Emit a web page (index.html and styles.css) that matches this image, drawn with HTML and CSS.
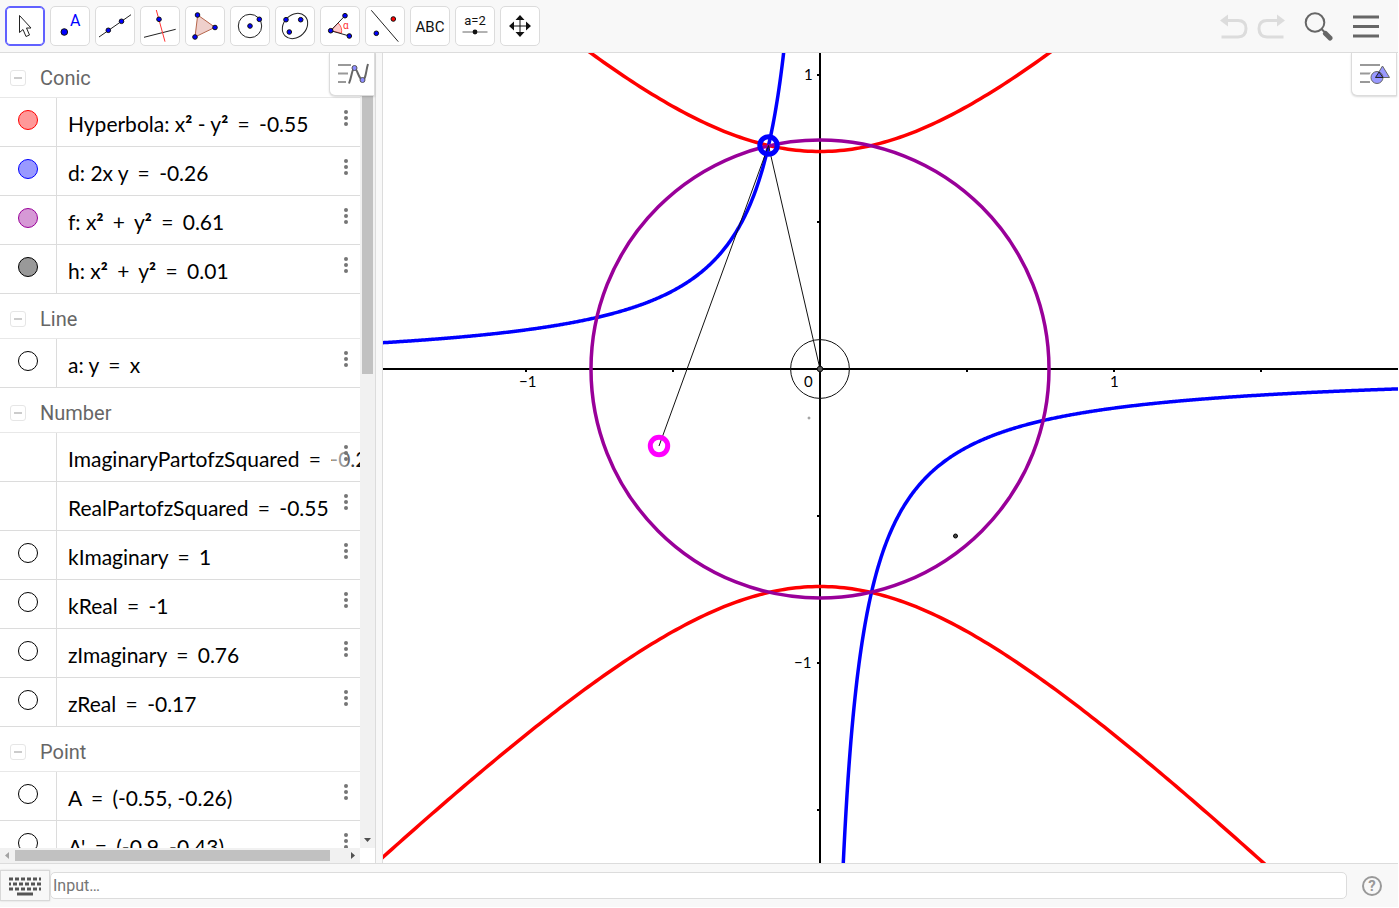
FILE: index.html
```html
<!DOCTYPE html>
<html lang="en">
<head>
<meta charset="utf-8">
<title>Graphing</title>
<link rel="stylesheet" href="styles.css">
</head>
<body>
<header class="toolbar">
  <div class="tools">
    <button class="tool selected" aria-label="Move"><svg viewBox="1 1 38 38"><path class="pointer" d="M14.500 9.500V26.500L18 23.500L21 30.500L24.500 29L21.500 22H26Z"/></svg></button>
    <button class="tool" aria-label="Point"><svg viewBox="1 1 38 38"><circle class="dot" cx="14.300" cy="26" r="3.300"/><text class="blue-text" x="20" y="20">A</text></svg></button>
    <button class="tool" aria-label="Line"><svg viewBox="1 1 38 38"><path class="thin" d="M4 31L36 8.700"/><circle class="dot" cx="13.300" cy="24.300" r="2.300"/><circle class="dot" cx="26.500" cy="15.300" r="2.300"/></svg></button>
    <button class="tool" aria-label="Perpendicular line"><svg viewBox="1 1 38 38"><path class="thin" d="M4 31.300L35.700 23.300"/><path class="thin red" d="M16.300 4L25 35.700"/><circle class="dot" cx="19" cy="13.300" r="2.300"/></svg></button>
    <button class="tool" aria-label="Polygon"><svg viewBox="1 1 38 38"><path class="poly" d="M12.700 9L30 21.300L10 31Z"/><circle class="dot" cx="12.500" cy="9" r="2.300"/><circle class="dot" cx="30" cy="21.500" r="2.300"/><circle class="dot" cx="10" cy="31" r="2.300"/></svg></button>
    <button class="tool" aria-label="Circle with center"><svg viewBox="1 1 38 38"><circle class="thin" cx="20" cy="20" r="11.700"/><circle class="dot" cx="20" cy="20" r="2.300"/><circle class="dot" cx="29.300" cy="13.300" r="2.300"/></svg></button>
    <button class="tool" aria-label="Conic"><svg viewBox="1 1 38 38"><ellipse class="thin" cx="20" cy="20" rx="14" ry="11.200" transform="rotate(-45 20 20)"/><circle class="dot" cx="11" cy="13.700" r="2.300"/><circle class="dot" cx="25.700" cy="13.700" r="2.300"/><circle class="dot" cx="14.300" cy="26" r="2.300"/></svg></button>
    <button class="tool" aria-label="Angle"><svg viewBox="1 1 38 38"><path class="wedge" d="M10.700 24.700L18 17Q22.500 21 21.500 27.200Z"/><path class="thin" d="M25 9.700L10.700 24.700L29.300 30"/><circle class="dot" cx="25" cy="9.700" r="2.300"/><circle class="dot" cx="10.700" cy="24.700" r="2.300"/><circle class="dot" cx="29.300" cy="30" r="2.300"/><text class="red-text" x="23" y="23">α</text></svg></button>
    <button class="tool" aria-label="Reflect"><svg viewBox="1 1 38 38"><path class="thin" d="M6.300 4.300L33.300 35.700"/><circle class="dot red-dot" cx="28.300" cy="13" r="2.300"/><circle class="dot" cx="11.300" cy="27.300" r="2.300"/></svg></button>
    <button class="tool" aria-label="Text"><svg viewBox="1 1 38 38"><text class="abc" x="20" y="25.500">ABC</text></svg></button>
    <button class="tool" aria-label="Slider"><svg viewBox="1 1 38 38"><text class="slider-text" x="20" y="19">a=2</text><path class="slider-line" d="M7.500 26H32.500"/><circle class="black" cx="20" cy="26" r="2.400"/></svg></button>
    <button class="tool" aria-label="Move view"><svg viewBox="1 1 38 38"><path class="slider-line cross" d="M20 12V28M12 20H28"/><path class="black" d="M20 9L24.500 14H15.500ZM20 31L24.500 26H15.500ZM9 20L14 15.500V24.500ZM31 20L26 15.500V24.500Z"/></svg></button>
  </div>
  <div class="actions">
    <button class="action" aria-label="Undo"><svg width="30" height="28" viewBox="0 0 30 28"><path class="faint-fill" d="M1 8.500L9 2.500V14.500Z"/><path class="faint" d="M8 8.500H19Q27 8.500 27 16.500T19 25H2.500"/></svg></button>
    <button class="action" aria-label="Redo"><svg width="30" height="28" viewBox="0 0 30 28"><path class="faint-fill" d="M29 8.500L21 2.500V14.500Z"/><path class="faint" d="M22 8.500H11Q3 8.500 3 16.500T11 25H27.500"/></svg></button>
    <button class="action search" aria-label="Search"><svg width="30" height="30" viewBox="0 0 30 30"><circle class="lens" cx="11" cy="11.500" r="9.300"/><path class="lens" d="M17.500 18L21 21.500"/><path class="handle" d="M21.500 22.500L26 27"/></svg></button>
    <button class="action" aria-label="Menu"><svg width="28" height="24" viewBox="0 0 28 24"><path class="bars" d="M1 3H27M1 12.500H27M1 22H27"/></svg></button>
  </div>
</header>

<main class="workspace">
  <section class="algebra" aria-label="Algebra">
    <div class="list-area">
      <div class="list">
        <h2 class="group"><button class="fold" aria-label="Collapse Conic"></button>Conic</h2>
        <div class="row"><div class="marker"><button class="marble m-red" aria-label="Toggle Hyperbola"></button></div><div class="expr">Hyperbola: x<b>²</b> - y<b>²</b> <span class="op">=</span> -0.55</div><button class="more" aria-label="More"><i></i><i></i><i></i></button></div>
        <div class="row"><div class="marker"><button class="marble m-blue" aria-label="Toggle d"></button></div><div class="expr">d: 2x y <span class="op">=</span> -0.26</div><button class="more" aria-label="More"><i></i><i></i><i></i></button></div>
        <div class="row"><div class="marker"><button class="marble m-purple" aria-label="Toggle f"></button></div><div class="expr">f: x<b>²</b> <span class="op">+</span> y<b>²</b> <span class="op">=</span> 0.61</div><button class="more" aria-label="More"><i></i><i></i><i></i></button></div>
        <div class="row"><div class="marker"><button class="marble m-gray" aria-label="Toggle h"></button></div><div class="expr">h: x<b>²</b> <span class="op">+</span> y<b>²</b> <span class="op">=</span> 0.01</div><button class="more" aria-label="More"><i></i><i></i><i></i></button></div>
        <h2 class="group"><button class="fold" aria-label="Collapse Line"></button>Line</h2>
        <div class="row"><div class="marker"><button class="marble" aria-label="Toggle a"></button></div><div class="expr">a: y <span class="op">=</span> x</div><button class="more" aria-label="More"><i></i><i></i><i></i></button></div>
        <h2 class="group"><button class="fold" aria-label="Collapse Number"></button>Number</h2>
        <div class="row"><div class="marker"></div><div class="expr">ImaginaryPartofzSquared <span class="op">=</span> -0.2</div><button class="more" aria-label="More"><i></i><i></i><i></i></button></div>
        <div class="row"><div class="marker"></div><div class="expr">RealPartofzSquared <span class="op">=</span> -0.55</div><button class="more" aria-label="More"><i></i><i></i><i></i></button></div>
        <div class="row"><div class="marker"><button class="marble" aria-label="Toggle kImaginary"></button></div><div class="expr">kImaginary <span class="op">=</span> 1</div><button class="more" aria-label="More"><i></i><i></i><i></i></button></div>
        <div class="row"><div class="marker"><button class="marble" aria-label="Toggle kReal"></button></div><div class="expr">kReal <span class="op">=</span> -1</div><button class="more" aria-label="More"><i></i><i></i><i></i></button></div>
        <div class="row"><div class="marker"><button class="marble" aria-label="Toggle zImaginary"></button></div><div class="expr">zImaginary <span class="op">=</span> 0.76</div><button class="more" aria-label="More"><i></i><i></i><i></i></button></div>
        <div class="row"><div class="marker"><button class="marble" aria-label="Toggle zReal"></button></div><div class="expr">zReal <span class="op">=</span> -0.17</div><button class="more" aria-label="More"><i></i><i></i><i></i></button></div>
        <h2 class="group"><button class="fold" aria-label="Collapse Point"></button>Point</h2>
        <div class="row"><div class="marker"><button class="marble" aria-label="Toggle A"></button></div><div class="expr">A <span class="op">=</span> (-0.55, -0.26)</div><button class="more" aria-label="More"><i></i><i></i><i></i></button></div>
        <div class="row"><div class="marker"><button class="marble" aria-label="Toggle A'"></button></div><div class="expr">A' <span class="op">=</span> (-0.9, -0.43)</div><button class="more" aria-label="More"><i></i><i></i><i></i></button></div>
      </div>
      <div class="vscroll"><div class="vthumb"></div><svg width="15" height="15" viewBox="0 0 15 15"><path class="arrow" d="M4 5H11L7.500 9Z"/></svg></div>
    </div>
    <div class="hscroll"><svg width="15" height="15" viewBox="0 0 15 15"><path class="arrow dim" d="M9 4V11L5 7.500Z"/></svg><div class="htrack"><div class="hthumb"></div></div><svg width="15" height="15" viewBox="0 0 15 15"><path class="arrow" d="M6 4V11L10 7.500Z"/></svg></div>
    <button class="stylebar" aria-label="Algebra settings"><svg width="44" height="42" viewBox="0 0 44 42"><path class="sbars" d="M8 12H21M8 20.500H18M8 29H16"/><path class="wave" d="M19 30.500C22 23 22 15 24.500 15S29 27 32.500 27S36 17 38 11"/><circle class="node" cx="24.500" cy="15" r="2.500"/><circle class="node" cx="32.500" cy="27" r="2.500"/></svg></button>
  </section>
  <div class="splitter"></div>
  <section class="graphics" aria-label="Graphics">
    <svg class="plot">
      <g transform="translate(437 316)">
        <path class="axis" d="M-2000 0H2000M0 -2000V2000"/>
        <path class="tick" d="M-294 0V3M-147 0V3M147 0V3M294 0V3M441 0V3M-3 -294H0M-3 -147H0M-3 147H0M-3 294H0M-3 441H0"/>
        <g class="labels"><text x="-301" y="18">−1</text><text x="-16" y="18">0</text><text x="290" y="18">1</text><text x="-16" y="-289">1</text><text x="-26" y="299">−1</text></g>
        <circle class="small-circle" r="29.400"/>
        <path id="hyperbola" class="curve c-red"/>
        <path id="product" class="curve c-blue"/>
        <circle class="curve c-purple" r="229"/>
        <path class="segment" d="M0 0L-51.500 -223.500L-161 77"/>
        <circle class="ring c-blue" cx="-51.500" cy="-223.500" r="8.700"/>
        <circle class="ring c-magenta" cx="-161" cy="77" r="8.700"/>
        <circle class="origin" r="2.800"/>
        <circle class="speck" cx="-11" cy="49" r="1"/>
        <circle class="point" cx="135.500" cy="167" r="2"/>
      </g>
    </svg>
    <button class="stylebar graphics-bar" aria-label="Graphics settings"><svg width="44" height="42" viewBox="0 0 44 42"><path class="sbars" d="M8 12H28M8 20.500H19M8 29H18"/><path class="halo" d="M30.500 13L37.500 24.500H23.500Z"/><circle class="halo" cx="25" cy="24.500" r="6"/><path class="shape" d="M30.500 13L37.500 24.500H23.500Z"/><circle class="shape" cx="25" cy="24.500" r="6"/><path class="overlap" d="M27 19L31 24.500H23.500Z"/></svg></button>
  </section>
</main>

<footer class="inputbar">
  <button class="keyboard" aria-label="Keyboard"><svg width="34" height="20" viewBox="0 0 34 20"><path class="keys" stroke-dasharray="4 2" d="M1 3H33M1 13H33"/><path class="keys" stroke-dasharray="4 2" stroke-dashoffset="2" d="M1 8H33"/><path class="keys" d="M9 18H25"/></svg></button>
  <input class="entry" type="text" placeholder="Input…" aria-label="Input">
  <button class="help" aria-label="Help">?</button>
</footer>
<script src="plot.js"></script>
</body>
</html>
```

FILE: styles.css
```css
* { box-sizing: border-box; }
html, body { height: 100%; }
body {
  margin: 0;
  padding: 0 1px 1px 0;
  display: flex;
  flex-direction: column;
  overflow: hidden;
  background: #fff;
  font-family: Roboto, "Liberation Sans", sans-serif;
}
button { margin: 0; padding: 0; border: 0; background: none; font: inherit; }
svg { display: block; fill: none; }

.toolbar {
  flex: none;
  display: flex;
  justify-content: space-between;
  align-items: center;
  height: 53px;
  padding: 0 18px 0 5px;
  background: #f8f8f8;
  border-bottom: 1px solid #dcdcdc;
}
.tools { display: flex; gap: 5px; }
.tool {
  width: 40px;
  height: 40px;
  background: #fff;
  border: 1px solid #dcdcdc;
  border-radius: 5px;
}
.tool svg { width: 38px; height: 38px; }
.selected { border-color: #6161ff; box-shadow: inset 0 0 0 1px #6161ff; }
.pointer { stroke: #222; fill: #fff; }
.dot { fill: #00f; stroke: #111; }
.red-dot { fill: #f00; }
.thin { stroke: #222; }
.red { stroke: #f33; }
.poly { stroke: #b5654a; fill: #efd0cc; }
.wedge { stroke: #f55; fill: #fcc; }
.black { fill: #111; }
.slider-line { stroke: #666; }
.cross { stroke: #111; }
.blue-text { fill: #00f; font-size: 16px; }
.red-text { fill: #f33; font-size: 10px; }
.abc { fill: #111; font-size: 15px; text-anchor: middle; }
.slider-text { fill: #111; font-size: 13px; text-anchor: middle; }

.actions { display: flex; align-items: center; gap: 7px; }
.search { margin: 0 11px; }
.faint { stroke: #dcdcdc; stroke-width: 3; }
.faint-fill { fill: #dcdcdc; }
.lens { stroke: #666; stroke-width: 2; }
.handle { stroke: #666; stroke-width: 5; stroke-linecap: round; }
.bars { stroke: #666; stroke-width: 3; }

.workspace { flex: 1; min-height: 0; display: flex; }
.algebra {
  position: relative;
  flex: none;
  width: 376px;
  display: flex;
  flex-direction: column;
  border-right: 1px solid #dcdcdc;
}
.list-area { flex: 1; min-height: 0; display: flex; }
.list { flex: 1; min-width: 0; overflow: hidden; }
.group {
  display: flex;
  align-items: center;
  gap: 14px;
  height: 45px;
  margin: 0;
  padding: 5px 10px 0;
  border-bottom: 1px solid #e8e8e8;
  color: #666;
  font-size: 20px;
  font-weight: 400;
}
.fold {
  display: flex;
  align-items: center;
  justify-content: center;
  width: 16px;
  height: 16px;
  border: 1px solid #e6e6e6;
  border-radius: 3px;
}
.fold::before { content: ""; width: 8px; height: 2px; background: #ccc; }
.row {
  position: relative;
  display: flex;
  height: 49px;
  overflow: hidden;
  border-bottom: 1px solid #dcdcdc;
}
.marker {
  flex: none;
  width: 57px;
  padding: 12px 18px;
  border-right: 1px solid #dcdcdc;
}
.marble { display: block; width: 20px; height: 20px; border: 1px solid #000; border-radius: 50%; }
.m-red { border-color: #f00; background: #ff9999; }
.m-blue { border-color: #00f; background: #9999ff; }
.m-purple { border-color: #909; background: #d699d6; }
.m-gray { background: #999; }
.expr {
  padding: 11px 0 0 11px;
  color: #000;
  font-family: Lato, "Liberation Sans", sans-serif;
  font-size: 21px;
  line-height: 30px;
  white-space: nowrap;
}
.op { margin: 0 4px; }
.more {
  position: absolute;
  top: 0;
  right: 0;
  display: flex;
  flex-direction: column;
  align-items: center;
  gap: 2px;
  width: 28px;
  height: 44px;
  padding-top: 12px;
  background: linear-gradient(to right, rgba(255,255,255,.6) 40%, rgba(255,255,255,0));
}
.more i { width: 4px; height: 4px; border-radius: 50%; background: #757575; }

.vscroll {
  flex: none;
  width: 15px;
  display: flex;
  flex-direction: column;
  justify-content: space-between;
  background: #f1f1f1;
}
.vthumb { width: 11px; height: 40.4%; margin-left: 2px; background: #c1c1c1; }
.hscroll { flex: none; display: flex; width: 360px; height: 15px; background: #f1f1f1; }
.htrack { flex: 1; padding: 2px 0; }
.hthumb { width: 95.5%; height: 11px; background: #c1c1c1; }
.arrow { fill: #505050; }
.dim { fill: #a3a3a3; }
.stylebar {
  position: absolute;
  top: 0;
  right: 0;
  width: 46px;
  height: 43px;
  background: #fff;
  border: 1px solid #dcdcdc;
  border-top: 0;
  border-radius: 0 0 0 6px;
  box-shadow: 0 1px 2px rgba(0,0,0,.15);
}
.graphics-bar { right: 1px; }
.sbars { stroke: #999; stroke-width: 2; }
.wave { stroke: #666; stroke-width: 2; }
.node { fill: #8c8cff; stroke: #555; }
.halo { stroke: #fff; stroke-width: 4; }
.shape { fill: #9999ff; stroke: #666; stroke-width: 1; }
.overlap { fill: #66e; stroke: #222; stroke-width: 1; }
.splitter { flex: none; width: 7px; background: #f8f8f8; border-right: 1px solid #dcdcdc; }

.graphics { position: relative; flex: 1; min-width: 0; overflow: hidden; }
.plot { width: 100%; height: 100%; }
.axis { stroke: #000; stroke-width: 2; }
.tick { stroke: #000; stroke-width: 2; }
.labels { fill: #000; font-family: Lato, "Liberation Sans", sans-serif; font-size: 15px; }
.small-circle, .segment { stroke: #111; stroke-width: 1; }
.curve { stroke-width: 3.5; }
.ring { stroke-width: 5; }
.c-red { stroke: #f00; }
.c-blue { stroke: #00f; }
.c-purple { stroke: #909; }
.c-magenta { stroke: #f0f; }
.origin { fill: #555; stroke: #111; }
.speck { fill: #bbb; stroke: #999; }
.point { fill: #444; stroke: #000; }

.inputbar {
  flex: none;
  display: flex;
  align-items: center;
  height: 44px;
  padding-right: 16px;
  background: #f8f8f8;
  border-top: 1px solid #dcdcdc;
}
.keyboard {
  display: flex;
  align-items: center;
  justify-content: center;
  width: 50px;
  height: 31px;
  border: 1px solid #d8d8d8;
  box-shadow: 0 0 2px rgba(0,0,0,.15);
}
.keys { stroke: #555; stroke-width: 3; }
.entry {
  flex: 1;
  min-width: 0;
  height: 27px;
  margin-right: 15px;
  padding: 0 2px;
  border: 1px solid #dcdcdc;
  border-radius: 5px;
  background: #fff;
  font-family: Roboto, "Liberation Sans", sans-serif;
  font-size: 16px;
}
.entry::placeholder { color: #757575; }
.help {
  width: 20px;
  height: 20px;
  border: 2px solid #999;
  border-radius: 50%;
  color: #999;
  font-size: 15px;
  font-weight: 700;
  line-height: 16px;
}
```

FILE: plot.js
```js
const RANGE = 2000;
const VERTEX = 217.5;
const PRODUCT = 11500;

function trace(fn, from, to, step) {
  const points = [];
  for (let x = from; x <= to; x += step) {
    points.push(x + " " + fn(x).toFixed(2));
  }
  return "M" + points.join("L");
}

const branch = x => Math.sqrt(x * x + VERTEX * VERTEX);
document.getElementById("hyperbola").setAttribute("d",
  trace(x => -branch(x), -RANGE, RANGE, 4) + trace(branch, -RANGE, RANGE, 4));

const inverse = x => PRODUCT / x;
document.getElementById("product").setAttribute("d",
  trace(inverse, -RANGE, -5, 1) + trace(inverse, 5, RANGE, 1));
```
